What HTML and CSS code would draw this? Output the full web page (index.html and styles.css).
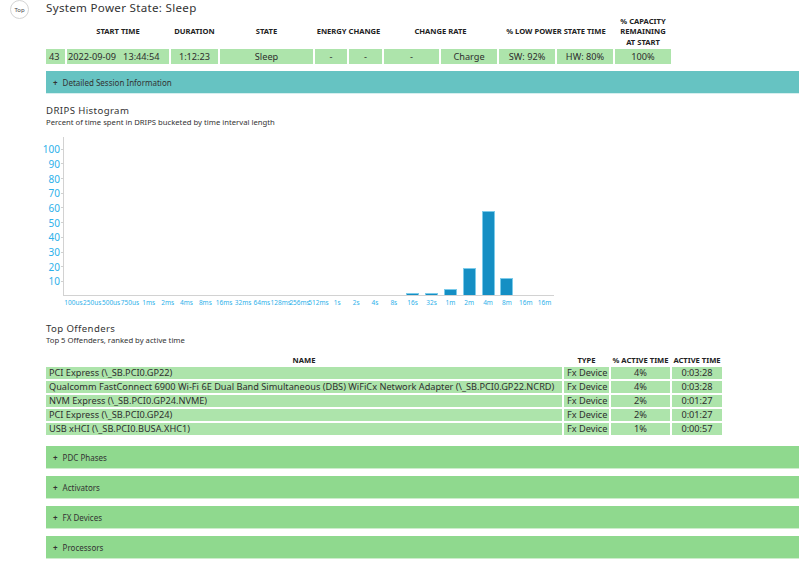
FILE: index.html
```html
<!DOCTYPE html>
<html>
<head>
<meta charset="utf-8">
<title>System Power State: Sleep</title>
<link rel="stylesheet" href="styles.css">
</head>
<body>
<div class="page">
  <div class="side"><a class="top-btn">Top</a></div>
  <div class="main">
    <h1 class="title">System Power State: Sleep</h1>
    <table class="summary">
      <colgroup>
        <col class="c19"><col class="c102"><col class="c47"><col class="c93"><col class="c32"><col class="c33"><col class="c55"><col class="c56"><col class="c56"><col class="c56"><col class="c56">
      </colgroup>
      <thead>
        <tr>
          <th></th>
          <th>START TIME</th>
          <th>DURATION</th>
          <th>STATE</th>
          <th colspan="2">ENERGY CHANGE</th>
          <th colspan="2">CHANGE RATE</th>
          <th colspan="2">% LOW POWER STATE TIME</th>
          <th>% CAPACITY<br>REMAINING<br>AT START</th>
        </tr>
      </thead>
      <tbody>
        <tr>
          <td class="num">43</td>
          <td class="date">2022-09-09&nbsp;&nbsp; 13:44:54</td>
          <td>1:12:23</td>
          <td>Sleep</td>
          <td>-</td>
          <td>-</td>
          <td>-</td>
          <td>Charge</td>
          <td>SW: 92%</td>
          <td>HW: 80%</td>
          <td>100%</td>
        </tr>
      </tbody>
    </table>
    <div class="collapser teal"><span class="plus">+</span>Detailed Session Information</div>

    <h2 class="section-title">DRIPS Histogram</h2>
    <p class="section-sub">Percent of time spent in DRIPS bucketed by time interval length</p>
    <div class="chart">
      <div class="yaxis">
        <span>100</span><span>90</span><span>80</span><span>70</span><span>60</span><span>50</span><span>40</span><span>30</span><span>20</span><span>10</span>
      </div>
      <div class="plot-wrap">
        <div class="plot">
          <div class="col"></div><div class="col"></div><div class="col"></div><div class="col"></div><div class="col"></div>
          <div class="col"></div><div class="col"></div><div class="col"></div><div class="col"></div><div class="col"></div>
          <div class="col"></div><div class="col"></div><div class="col"></div><div class="col"></div><div class="col"></div>
          <div class="col"></div><div class="col"></div><div class="col"></div>
          <div class="col"><div class="bar" style="height:2px"></div></div>
          <div class="col"><div class="bar" style="height:2px"></div></div>
          <div class="col"><div class="bar" style="height:6px"></div></div>
          <div class="col"><div class="bar" style="height:27px"></div></div>
          <div class="col"><div class="bar" style="height:84px"></div></div>
          <div class="col"><div class="bar" style="height:17px"></div></div>
          <div class="col"></div><div class="col"></div>
        </div>
        <div class="xlabels">
          <span>100us</span><span>250us</span><span>500us</span><span>750us</span><span>1ms</span><span>2ms</span><span>4ms</span><span>8ms</span><span>16ms</span><span>32ms</span><span>64ms</span><span>128ms</span><span>256ms</span><span>512ms</span><span>1s</span><span>2s</span><span>4s</span><span>8s</span><span>16s</span><span>32s</span><span>1m</span><span>2m</span><span>4m</span><span>8m</span><span>16m</span><span>16m</span>
        </div>
      </div>
    </div>

    <h2 class="section-title offenders-title">Top Offenders</h2>
    <p class="section-sub">Top 5 Offenders, ranked by active time</p>
    <table class="offenders">
      <colgroup>
        <col class="o-name"><col class="o-type"><col class="o-pct"><col class="o-time">
      </colgroup>
      <thead>
        <tr><th>NAME</th><th>TYPE</th><th>% ACTIVE TIME</th><th>ACTIVE TIME</th></tr>
      </thead>
      <tbody>
        <tr><td class="left">PCI Express (\_SB.PCI0.GP22)</td><td class="left">Fx Device</td><td>4%</td><td>0:03:28</td></tr>
        <tr><td class="left">Qualcomm FastConnect 6900 Wi-Fi 6E Dual Band Simultaneous (DBS) WiFiCx Network Adapter (\_SB.PCI0.GP22.NCRD)</td><td class="left">Fx Device</td><td>4%</td><td>0:03:28</td></tr>
        <tr><td class="left">NVM Express (\_SB.PCI0.GP24.NVME)</td><td class="left">Fx Device</td><td>2%</td><td>0:01:27</td></tr>
        <tr><td class="left">PCI Express (\_SB.PCI0.GP24)</td><td class="left">Fx Device</td><td>2%</td><td>0:01:27</td></tr>
        <tr><td class="left">USB xHCI (\_SB.PCI0.BUSA.XHC1)</td><td class="left">Fx Device</td><td>1%</td><td>0:00:57</td></tr>
      </tbody>
    </table>

    <div class="collapsers">
      <div class="collapser green"><span class="plus">+</span>PDC Phases</div>
      <div class="collapser green"><span class="plus">+</span>Activators</div>
      <div class="collapser green"><span class="plus">+</span>FX Devices</div>
      <div class="collapser green"><span class="plus">+</span>Processors</div>
    </div>
  </div>
</div>
</body>
</html>
```

FILE: styles.css
```css
html, body {
  margin: 0;
  padding: 0;
  background: #ffffff;
}

body {
  font-family: "Noto Sans", "Open Sans", sans-serif;
  color: #2e2e2e;
  overflow: hidden;
}

.page {
  display: flex;
  align-items: flex-start;
}

.side {
  width: 46px;
  flex: none;
  padding: 0 0 0 10px;
  box-sizing: border-box;
}

.top-btn {
  display: flex;
  align-items: center;
  justify-content: center;
  width: 19px;
  height: 19px;
  box-sizing: border-box;
  border: 1px solid #d4d4d4;
  border-radius: 50%;
  font-size: 6px;
  color: #444;
  margin-top: 0;
}

.main {
  flex: 1;
  min-width: 0;
}

.title {
  margin: 0;
  padding-top: 1px;
  font-size: 11.6px;
  line-height: 13px;
  font-weight: 400;
  letter-spacing: 0.3px;
  color: #333;
}

/* summary table */
.summary {
  table-layout: fixed;
  width: 629px;
  border-collapse: separate;
  border-spacing: 2px;
  margin: 0 0 0 -2px;
}

.c19 { width: 19px; }
.c102 { width: 102px; }
.c47 { width: 47px; }
.c93 { width: 93px; }
.c32 { width: 32px; }
.c33 { width: 33px; }
.c55 { width: 55px; }
.c56 { width: 56px; }

.summary th {
  font-size: 7.6px;
  font-weight: 700;
  line-height: 10.4px;
  color: #222;
  padding: 0;
  height: 31px;
  text-align: center;
  vertical-align: middle;
  white-space: nowrap;
}

.summary td {
  background: #ade4ab;
  font-size: 9.2px;
  line-height: 15px;
  height: 15px;
  padding: 0;
  text-align: center;
  white-space: nowrap;
  color: #2e2e2e;
}

.summary td.num {
  text-align: left;
  padding-left: 3px;
}

.summary td.date {
  text-align: left;
  padding-left: 1px;
}

/* collapsible bars */
.collapser {
  height: 23px;
  box-sizing: border-box;
  display: flex;
  align-items: center;
  font-size: 8px;
  color: #333;
  padding-left: 7px;
}

.collapser .plus {
  font-size: 8px;
  font-weight: 700;
  margin-right: 5px;
}

.teal {
  background: #66c3c2;
  margin-top: 5px;
  border-bottom: 1px solid #d6efef;
}

.green {
  background: #8fd98e;
  border-bottom: 1px solid #cdeecd;
}

.collapsers {
  display: flex;
  flex-direction: column;
  gap: 7px;
  margin-top: 9px;
}

/* section headings */
.section-title {
  margin: 10px 0 0 0;
  font-size: 9.6px;
  line-height: 13px;
  font-weight: 400;
  letter-spacing: 0.4px;
  color: #333;
}

.section-sub {
  margin: 0;
  font-size: 7.7px;
  line-height: 10px;
  color: #333;
}

.offenders-title {
  margin-top: 14px;
}

/* chart */
.chart {
  display: flex;
  margin-top: 10px;
}

.yaxis {
  width: 17px;
  height: 159px;
  display: flex;
  flex-direction: column;
  justify-content: flex-end;
  align-items: flex-end;
  padding-bottom: 7.4px;
  box-sizing: border-box;
  flex: none;
}

.yaxis span {
  display: flex;
  align-items: center;
  height: 14.71px;
  font-size: 10px;
  color: #2eb1ea;
  white-space: nowrap;
}

.yaxis span::after {
  content: "";
  width: 2px;
  height: 1px;
  background: #d0d0d0;
  margin-left: 1px;
}

.plot-wrap {
  flex: none;
  width: 491px;
}

.plot {
  height: 159px;
  box-sizing: border-box;
  border-left: 1px solid #d2d2d2;
  border-bottom: 1px solid #d2d2d2;
  display: grid;
  grid-template-columns: repeat(26, minmax(0, 1fr));
}

.col {
  display: flex;
  justify-content: center;
  align-items: flex-end;
  min-width: 0;
}

.bar {
  width: 13px;
  box-sizing: border-box;
  background: #158fc4;
  border: 1px solid #7ccbea;
  border-bottom: none;
}

.xlabels {
  display: grid;
  grid-template-columns: repeat(26, minmax(0, 1fr));
  margin-left: 1px;
  margin-top: 2px;
}

.xlabels span {
  display: flex;
  justify-content: center;
  min-width: 0;
  white-space: nowrap;
  font-size: 6.5px;
  line-height: 10px;
  color: #2eb1ea;
}

/* offenders table */
.offenders {
  table-layout: fixed;
  width: 680px;
  border-collapse: separate;
  border-spacing: 2px 2px;
  margin: 8px 0 0 -2px;
}

.o-name { width: 516px; }
.o-type { width: 45px; }
.o-pct { width: 59px; }
.o-time { width: 50px; }

.offenders th {
  font-size: 7.6px;
  font-weight: 700;
  line-height: 10px;
  color: #222;
  padding: 0;
  text-align: center;
  white-space: nowrap;
}

.offenders td {
  background: #ade4ab;
  font-size: 9.2px;
  line-height: 12px;
  height: 12px;
  padding: 0;
  text-align: center;
  white-space: nowrap;
  overflow: hidden;
  color: #2e2e2e;
}

.offenders td.left {
  text-align: left;
  padding-left: 3px;
}
```
